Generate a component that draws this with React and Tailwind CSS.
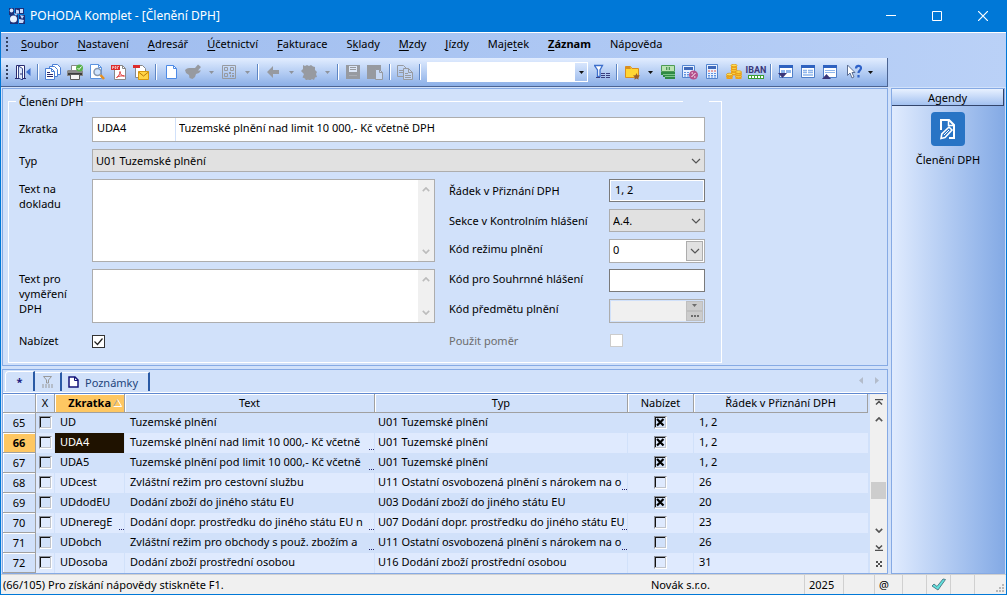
import { useState } from "react";
import clsx from "clsx";

const MENU = [
  ["", "S", "oubor"],
  ["", "N", "astavení"],
  ["", "A", "dresář"],
  ["", "Ú", "četnictví"],
  ["", "F", "akturace"],
  ["S", "k", "lady"],
  ["", "M", "zdy"],
  ["", "J", "ízdy"],
  ["Maje", "t", "ek"],
  ["", "Z", "áznam"],
  ["Náp", "o", "věda"],
];

const COLUMNS = [
  { label: "", width: "w-[33px]" },
  { label: "X", width: "w-[19px]" },
  { label: "Zkratka", width: "w-[70px]" },
  { label: "Text", width: "w-[250px]" },
  { label: "Typ", width: "w-[253px]" },
  { label: "Nabízet", width: "w-[66px]" },
  { label: "Řádek v Přiznání DPH", width: "" },
];

const ROWS = [
  { id: 65, code: "UD", text: "Tuzemské plnění", type: "U01 Tuzemské plnění", offer: true, line: "1, 2" },
  { id: 66, code: "UDA4", text: "Tuzemské plnění nad limit 10 000,- Kč včetně", textCut: true, type: "U01 Tuzemské plnění", offer: true, line: "1, 2" },
  { id: 67, code: "UDA5", text: "Tuzemské plnění pod limit 10 000,- Kč včetně", textCut: true, type: "U01 Tuzemské plnění", offer: true, line: "1, 2" },
  { id: 68, code: "UDcest", text: "Zvláštní režim pro cestovní službu", type: "U11 Ostatní osvobozená plnění s nárokem na o", typeCut: true, offer: false, line: "26" },
  { id: 69, code: "UDdodEU", text: "Dodání zboží do jiného státu EU", type: "U03 Dodání zboží do jiného státu EU", offer: true, line: "20" },
  { id: 70, code: "UDneregE", codeCut: true, text: "Dodání dopr. prostředku do jiného státu EU n", textCut: true, type: "U07 Dodání dopr. prostředku do jiného státu EU", typeCut: true, offer: false, line: "23" },
  { id: 71, code: "UDobch", text: "Zvláštní režim pro obchody s použ. zbožím a", textCut: true, type: "U11 Ostatní osvobozená plnění s nárokem na o", typeCut: true, offer: false, line: "26" },
  { id: 72, code: "UDosoba", text: "Dodání zboží prostřední osobou", type: "U16 Dodání zboží prostřední osobou", offer: false, line: "31" },
];

const Svg = ({ children, className = "h-4 w-4", box = "0 0 16 16" }) => (
  <svg viewBox={box} className={clsx("shrink-0", className)} fill="none" aria-hidden="true">
    {children}
  </svg>
);

/* ---------- toolbar drawings ---------- */

const DoorIcon = () => (
  <Svg>
    <path d="M1.500 14.500v-13h8v13" fill="#fff" stroke="#2b2b6e" />
    <path d="M3.500 2l4 2.500V16l-4-2z" fill="#dbe6fb" stroke="#3a4a8c" />
    <path d="M6 9v2M0 14.500h4M8 14.500h3" stroke="#2b2b6e" />
    <path d="M15.500 4v8L11 8z" fill="#3c6fd0" />
  </Svg>
);

const CopiesIcon = () => (
  <Svg>
    <path d="M7.500 .5h5l3 3v7h-8z" fill="#fff" stroke="#4a7fd6" />
    <path d="M4.500 2.500h5l3 3v7h-8z" fill="#fff" stroke="#4a7fd6" />
    <path d="M.5 4.500h6l3 3v8h-9z" fill="#fff" stroke="#4a7fd6" />
    <path d="M6.500 4.500v3h3" stroke="#4a7fd6" />
    <path d="M2 8.500h3M2 10.500h6M2 12.500h6" stroke="#2b2b6e" />
  </Svg>
);

const PrinterIcon = () => (
  <Svg>
    <path d="M4.500 1.500h7v5h-7z" fill="#fff" stroke="#888" />
    <path d="M1 6h14l1 1v5H0V7z" fill="#8a8a8a" />
    <path d="M1 9h14v2H1z" fill="#3c3c3c" />
    <path d="M3.500 10.500h9v5h-9z" fill="#f4f4f4" stroke="#5a5a5a" />
    <circle cx="12.500" cy="4" r="3.500" fill="#57b04a" />
    <path d="M10.500 4l1.500 1.500 2.500-3" stroke="#fff" />
  </Svg>
);

const PreviewIcon = () => (
  <Svg>
    <path d="M1.500 .5h8l3 3v11h-11z" fill="#fff" stroke="#5b93e0" />
    <path d="M9.500 .5v3h3" stroke="#5b93e0" />
    <circle cx="8.500" cy="8" r="3.500" fill="#cfe4ff" stroke="#8898b0" strokeWidth="1.500" />
    <path d="M11.500 11l3.500 4" stroke="#e59020" strokeWidth="2.500" />
  </Svg>
);

const PdfIcon = () => (
  <Svg>
    <path d="M3.500 1.500h8l3 3v11h-11z" fill="#fff" stroke="#888" />
    <path d="M11.500 1.500v3h3" stroke="#888" />
    <path d="M0 1h9v5H0z" fill="#dd2c2c" />
    <path d="M1.500 5V2.500h1V4M4 2.500v2h1v-2zM6.500 5V2.500h1.500" stroke="#fff" strokeWidth=".6" />
    <path d="M5.500 13.500c2-1 3.500-3.500 3.500-6 0 3 2 4.500 4.500 4.500-3-.4-6 0-8 1.500z" stroke="#dd3a3a" />
  </Svg>
);

const PdfMailIcon = () => (
  <Svg>
    <path d="M2.500 1.500h7l3 3v9h-10z" fill="#fff" stroke="#888" />
    <path d="M0 1h7v3H0z" fill="#dd2c2c" />
    <path d="M5.500 7.500h10v8h-10z" fill="#ffd447" stroke="#d99a10" />
    <path d="M5.500 8l5 4 5-4" stroke="#b9790a" />
  </Svg>
);

const PageIcon = () => (
  <Svg>
    <path d="M3.500 1.500h7l3 3v10h-10z" fill="#fff" stroke="#4d8ae6" />
    <path d="M10.500 1.500v3h3" stroke="#4d8ae6" />
  </Svg>
);

const WriteIcon = () => (
  <Svg>
    <path d="M0 6l2-1.500L4 4h6l3-3.500L16 3l-3 3.500h3L14 9l-3 1-1 3-2.500 2-3-1L4 11l-3-2z" fill="#979aa0" />
  </Svg>
);

const QrIcon = () => (
  <Svg>
    <path d="M1.500 1.500h13v13h-13z" stroke="#979aa0" />
    <path d="M3.500 3.500h3v3h-3zM9.500 3.500h3v3h-3zM3.500 9.500h3v3h-3z" stroke="#979aa0" />
    <path d="M8 8h2v2H8zM11 9h2v1h-2zM9 11h1v2H9zM11 11h2v2h-2z" fill="#979aa0" />
  </Svg>
);

const BackIcon = () => (
  <Svg>
    <path d="M2 8l6-6v4h6v4H8v4z" fill="#979aa0" />
  </Svg>
);

const BlobIcon = () => (
  <Svg>
    <path d="M2 1l2 1 2-1 2 1 2-1 2 1.500 2 .5v3l2 2-1 2 1 3-2 .5-1 2.500-2-1-2 1.500-2-1-2 1-1-2-2.500-1L3 10 0 7l2-2z" fill="#979aa0" />
  </Svg>
);

const SaveIcon = () => (
  <Svg>
    <path d="M1 1h14v14H1z" fill="#979aa0" />
    <path d="M4 2h8v6H4z" fill="#dce6f6" />
    <path d="M5 3.500h6M5 5.500h6" stroke="#979aa0" />
    <path d="M4 11h8v1H4z" fill="#a9adb4" />
  </Svg>
);

const PasteIcon = () => (
  <Svg>
    <path d="M0 1h14v14H0z" fill="#979aa0" />
    <path d="M8.500 5.500h4l3 3v7h-7z" fill="#c8d9f4" stroke="#979aa0" />
    <path d="M12.500 5.500v3h3" stroke="#979aa0" />
  </Svg>
);

const CopyIcon = () => (
  <Svg>
    <path d="M.5 1.500h6l3 3v8h-9z" stroke="#979aa0" />
    <path d="M2 6.500h4M2 8.500h4" stroke="#979aa0" />
    <path d="M6.500 4.500h5l4 4v7h-9z" fill="#c1d4f3" stroke="#979aa0" />
    <path d="M11.500 4.500v4h4M8 9.500h3M8 11.500h6M8 13.500h6" stroke="#979aa0" />
  </Svg>
);

const FilterIcon = () => (
  <Svg>
    <path d="M.5 1.500h8L6 6v6.500H3.500V6z" fill="#fff" stroke="#3d6fcc" strokeWidth="1.300" />
    <path d="M7 9.500h4M12 9.500h4M7 11.500h4M12 11.500h4M2 13.500h4M7 13.500h4M12 13.500h4" stroke="#3a3f80" />
  </Svg>
);

const FolderIcon = () => (
  <Svg>
    <path d="M1.500 2.500h5l1.500 2h6.500v9h-13z" fill="#ffd633" stroke="#d98e1e" />
    <path d="M2 3h4l1 2H2z" fill="#d98e1e" />
    <path d="M12.500 9l1 2.200 2.500.3-1.800 1.700.4 2.600-2.100-1.200-2.100 1.200.4-2.600L9 11.500l2.500-.3z" fill="#9a5f2c" />
  </Svg>
);

const MoneyIcon = () => (
  <Svg>
    <path d="M1 8h14v7H5v-2H3v-2H1z" fill="#2f8a45" />
    <path d="M3 10.500h12M5 12.500h10" stroke="#7cc48a" />
    <path d="M1.500 1.500h13v6h-13z" fill="#b9e3b2" stroke="#4d9a55" />
    <path d="M6 3h4v3H6z" fill="#4d9a55" />
    <path d="M8 3v3" stroke="#e2f5dd" />
  </Svg>
);

const CalcIcon = ({ percent }) => (
  <Svg>
    {percent ? (
      <>
        <path d="M.5 1.500h12v12H.5z" fill="#e8f1ff" stroke="#5485cf" />
        <path d="M2 3h9v3H2z" fill="#3f68b8" />
        <path d="M2 8.500h8M2 10.500h6M2 12h5" stroke="#5f92e0" strokeDasharray="2 1" />
        <circle cx="11.500" cy="11" r="4.500" fill="#b5508c" />
        <path d="M9.500 13l4-4M9.500 9h1.500M12 13h1.500" stroke="#fff" />
      </>
    ) : (
      <>
        <path d="M2.500 .5h11v14h-11z" fill="#e8f1ff" stroke="#5485cf" />
        <path d="M4 2h8v3H4z" fill="#3f68b8" />
        <path d="M4 7h8" stroke="#e05a4e" strokeDasharray="2 1" />
        <path d="M4 9.500h8M4 11.500h8M4 13h8" stroke="#5f92e0" strokeDasharray="2 1" />
      </>
    )}
  </Svg>
);

const Coin = ({ x, y }) => (
  <>
    <path d={`M${x} ${y}h6v2.500h-6z`} fill="#f0a41c" />
    <ellipse cx={x + 3} cy={y} rx="3" ry="1.300" fill="#ffe052" stroke="#d98f10" strokeWidth=".7" />
  </>
);

const CoinsIcon = () => (
  <Svg>
    <Coin x={5} y={9} />
    <Coin x={5} y={6.5} />
    <Coin x={5} y={4} />
    <Coin x={5} y={1.5} />
    <Coin x={0.500} y={12.500} />
    <Coin x={0.500} y={10.500} />
    <Coin x={9.500} y={12.500} />
    <Coin x={9.500} y={10} />
    <Coin x={9.500} y={8} />
  </Svg>
);

const IbanIcon = () => (
  <span className="flex flex-col items-center">
    <span className="font-['Liberation_Sans_Narrow','Roboto',sans-serif] text-[9px] leading-[9px] font-bold text-[#3a3678]">IBAN</span>
    <Svg className="h-[4px] w-4" box="0 0 16 4">
      <path d="M0 0h16v4H0z" fill="#3c9f34" />
      <path d="M1 2h14" stroke="#fff" strokeWidth="2" strokeDasharray="2 1" />
    </Svg>
  </span>
);

const WindowIcon = ({ kind }) => (
  <Svg>
    <path d="M1.500 1.500h13v12h-13z" fill="#fff" stroke="#4f7fc9" />
    <path d="M1 1h14v3H1z" fill="#2f62c0" />
    {kind === "down" && (
      <>
        <path d="M3 6h4v3H3zM8 6h5v3H8z" fill="#8fb6ec" />
        <path d="M0 9h9L4.500 14z" fill="#3a3678" />
      </>
    )}
    {kind === "full" && <path d="M3 6.500h4M8 6.500h5M3 8.500h4M8 8.500h5M3 11h10" stroke="#8fb6ec" strokeWidth="1.500" />}
    {kind === "up" && (
      <>
        <path d="M3 6.500h10M3 8.500h10" stroke="#8fb6ec" />
        <path d="M0 15h9L4.500 10z" fill="#3a3678" />
      </>
    )}
  </Svg>
);

const HelpIcon = () => (
  <Svg className="ml-1 h-4 w-4">
    <path d="M1.500 1v10.500l2.500-2.500 2 5 2-1-2-4.500h3z" fill="#fff" stroke="#5c6f95" />
    <path d="M10 4.500c0-3.500 5-3.500 5-.5 0 2.500-2.500 2.500-2.500 5M12.500 11v2.500" stroke="#2f62c8" strokeWidth="2.200" />
  </Svg>
);

const Triangle = ({ color = "#111" }) => (
  <Svg className="h-[3px] w-[5px]" box="0 0 5 3">
    <path d="M0 0h5L2.500 3z" fill={color} />
  </Svg>
);

const Chevron = ({ up, color = "#555", className = "h-[6px] w-[10px]", width = 1.2 }) => (
  <Svg className={className} box="0 0 10 6">
    <path d={up ? "M1 5l4-4 4 4" : "M1 1l4 4 4-4"} stroke={color} strokeWidth={width} />
  </Svg>
);

/* ---------- toolbar parts ---------- */

const ToolButton = ({ label, children, disabled }) => (
  <button type="button" aria-label={label} disabled={disabled} className="flex h-[22px] w-[22px] shrink-0 items-center justify-center">
    {children}
  </button>
);

const DropButton = ({ label, disabled }) => (
  <button type="button" aria-label={label} disabled={disabled} className="flex h-[22px] w-[14px] shrink-0 items-center justify-center">
    <Triangle color={disabled ? "#8e939c" : "#111"} />
  </button>
);

const Separator = () => (
  <div className="flex h-4 w-2 shrink-0 justify-center">
    <div className="w-px bg-[#5e86c4]" />
    <div className="w-px bg-white" />
  </div>
);

const Grip = ({ className }) => (
  <div className={clsx("w-[2px] shrink-0 bg-[repeating-linear-gradient(#33415f_0_2px,transparent_2px_4px)]", className)} />
);

const TitleBar = () => (
  <header className="flex h-[33px] items-center border-b border-white bg-[#0078d7] pl-2 text-white">
    <Svg className="mr-1 h-4 w-[17px]" box="0 0 17 16">
      <path d="M0 0h5v7H0zM6 0h9v6H6zM1 7h8v9H1zM10 7h6v9h-6z" fill="#1d2f78" />
      <ellipse cx="2.500" cy="2.500" rx="1.800" ry="2" fill="#dce9ff" />
      <circle cx="4.500" cy="11" r="3.500" fill="#e8f1ff" />
      <path d="M7 1.500l3 1v3H7zM11 1h3v4h-3zM5 5l3 1-1 2zM11 7l4 1-2 3zM10 11l5 1-1 3h-4z" fill="#c5dafc" />
    </Svg>
    <h1 className="flex-1 pb-px text-xs">POHODA Komplet - [Členění DPH]</h1>
    <button type="button" aria-label="Minimalizovat" className="flex h-8 w-[46px] items-center justify-center">
      <Svg className="h-[10px] w-[10px]" box="0 0 10 10"><path d="M0 4.500h10" stroke="#fff" /></Svg>
    </button>
    <button type="button" aria-label="Maximalizovat" className="flex h-8 w-[46px] items-center justify-center">
      <Svg className="h-[10px] w-[10px]" box="0 0 10 10"><path d="M.5.5h9v9h-9z" stroke="#fff" /></Svg>
    </button>
    <button type="button" aria-label="Zavřít" className="flex h-8 w-[46px] items-center justify-center">
      <Svg className="h-[10px] w-[10px]" box="0 0 10 10"><path d="M0 0l10 10M10 0L0 10" stroke="#fff" strokeWidth="1.200" /></Svg>
    </button>
  </header>
);

const MenuBar = () => (
  <nav className="flex h-[25px] items-center pb-1 pl-[5px]">
    <Grip className="h-[14px]" />
    <div className="flex gap-[19px] pl-[13px]">
      {MENU.map(([before, key, after]) => (
        <button key={before + key + after} type="button" className={clsx("whitespace-nowrap", key === "Z" && "font-bold")}>
          {before}
          <span className="underline underline-offset-2">{key}</span>
          {after}
        </button>
      ))}
    </div>
  </nav>
);

const Toolbar = () => (
  <div className="mr-[118px] flex h-[29px] items-center border-r border-b border-[#4b6493] bg-linear-to-b from-[#e2edff] to-[#8bafe7] pl-[5px]">
    <Grip className="mr-1 h-[14px]" />
    <ToolButton label="Konec"><DoorIcon /></ToolButton>
    <Separator />
    <ToolButton label="Tiskové sestavy"><CopiesIcon /></ToolButton>
    <ToolButton label="Tisk"><PrinterIcon /></ToolButton>
    <ToolButton label="Náhled"><PreviewIcon /></ToolButton>
    <ToolButton label="Export do PDF"><PdfIcon /></ToolButton>
    <ToolButton label="Odeslat PDF"><PdfMailIcon /></ToolButton>
    <Separator />
    <ToolButton label="Nový"><PageIcon /></ToolButton>
    <ToolButton label="Zápis" disabled><WriteIcon /></ToolButton>
    <DropButton label="Možnosti zápisu" disabled />
    <ToolButton label="QR kód" disabled><QrIcon /></ToolButton>
    <DropButton label="Možnosti QR kódu" disabled />
    <Separator />
    <ToolButton label="Zpět" disabled><BackIcon /></ToolButton>
    <DropButton label="Historie" disabled />
    <ToolButton label="Vazby" disabled><BlobIcon /></ToolButton>
    <DropButton label="Možnosti vazeb" disabled />
    <Separator />
    <ToolButton label="Uložit" disabled><SaveIcon /></ToolButton>
    <ToolButton label="Vložit" disabled><PasteIcon /></ToolButton>
    <Separator />
    <ToolButton label="Kopírovat" disabled><CopyIcon /></ToolButton>
    <Separator />
    <div className="mx-[3px] flex h-5 w-[161px] shrink-0 border border-white bg-white">
      <input aria-label="Hledat" className="min-w-0 flex-1 px-1 outline-none" />
      <button type="button" aria-label="Hledané výrazy" className="flex w-3 items-center justify-center bg-linear-to-b from-[#d8e6fd] to-[#a3c0ee]">
        <Triangle />
      </button>
    </div>
    <ToolButton label="Filtr"><FilterIcon /></ToolButton>
    <Separator />
    <ToolButton label="Oblíbené"><FolderIcon /></ToolButton>
    <DropButton label="Seznam oblíbených" />
    <ToolButton label="Měny"><MoneyIcon /></ToolButton>
    <ToolButton label="Kalkulačka DPH"><CalcIcon percent /></ToolButton>
    <ToolButton label="Kalkulačka"><CalcIcon /></ToolButton>
    <ToolButton label="Mince"><CoinsIcon /></ToolButton>
    <ToolButton label="IBAN"><IbanIcon /></ToolButton>
    <Separator />
    <ToolButton label="Tabulka dolů"><WindowIcon kind="down" /></ToolButton>
    <ToolButton label="Celé okno"><WindowIcon kind="full" /></ToolButton>
    <ToolButton label="Tabulka nahoru"><WindowIcon kind="up" /></ToolButton>
    <ToolButton label="Nápověda"><HelpIcon /></ToolButton>
    <DropButton label="Možnosti nápovědy" />
  </div>
);

/* ---------- form ---------- */

const GraySelect = ({ id, value, className }) => (
  <div className={clsx("relative h-[23px]", className)}>
    <select id={id} defaultValue={value} className="h-full w-full appearance-none border border-[#adadad] bg-[#e1e1e1] pl-[3px] outline-none">
      <option>{value}</option>
    </select>
    <span className="pointer-events-none absolute inset-y-0 right-1 flex items-center">
      <Chevron />
    </span>
  </div>
);

const NoteBox = ({ id, label, className }) => (
  <div className={clsx("flex", className)}>
    <label htmlFor={id} className="w-[73px] shrink-0 pt-[2px] pr-3">{label}</label>
    <div className="flex flex-1 border border-[#adadad] bg-white">
      <textarea id={id} className="min-w-0 flex-1 resize-none px-1 outline-none" />
      <div className="flex w-4 flex-col items-center justify-between bg-[#f0f0f0] py-[7px]">
        <Chevron up color="#bcbcbc" width={2} className="h-[5px] w-2" />
        <Chevron color="#bcbcbc" width={2} className="h-[5px] w-2" />
      </div>
    </div>
  </div>
);

const SideField = ({ id, label, muted, raised, children }) => (
  <div className="flex h-[23px] items-center">
    <label htmlFor={id} className={clsx("w-40 shrink-0", muted && "text-[#6d6d6d]", raised && "pb-1")}>{label}</label>
    {children}
  </div>
);

const RecordForm = () => {
  const [offered, setOffered] = useState(true);

  return (
    <form className="border border-[#86aae4] bg-[#d1e1fa] px-[5px] pt-[5px] pb-[2px]">
      <fieldset className="relative w-[714px] border border-white px-[10px] pb-[9px]">
        <legend className="-ml-[3px] px-[3px] leading-[15px]">Členění DPH</legend>
        <span className="absolute -top-[8px] right-3 h-[1px] w-[26px] bg-[#d1e1fa]" />

        <div className="mt-2 mr-[6px] flex flex-col gap-[7px]">
          <div className="flex h-[25px] items-center">
            <label htmlFor="code" className="w-[73px] shrink-0 pb-[2px]">Zkratka</label>
            <div className="flex h-full flex-1 border border-[#adadad] bg-white">
              <input id="code" defaultValue="UDA4" className="w-[83px] border-r border-[#d1e1fa] px-1 pb-[5px] outline-none" />
              <input aria-label="Název" defaultValue="Tuzemské plnění nad limit 10 000,- Kč včetně DPH" className="min-w-0 flex-1 px-[3px] pb-[5px] outline-none" />
            </div>
          </div>

          <div className="flex items-center">
            <label htmlFor="type" className="w-[73px] shrink-0">Typ</label>
            <GraySelect id="type" value="U01 Tuzemské plnění" className="flex-1" />
          </div>

          <div className="flex gap-[14px]">
            <div className="flex flex-1 flex-col gap-[7px]">
              <NoteBox id="doc-text" label="Text na dokladu" className="h-[83px]" />
              <NoteBox id="vat-text" label="Text pro vyměření DPH" className="h-[54px]" />
              <div className="flex h-[23px] items-center">
                <label htmlFor="offered" className="w-[73px] pb-[2px]">Nabízet</label>
                <span className="relative flex">
                  <input
                    id="offered"
                    type="checkbox"
                    checked={offered}
                    onChange={() => setOffered(!offered)}
                    className="peer h-[13px] w-[13px] appearance-none border border-[#333] bg-white"
                  />
                  <svg viewBox="0 0 13 13" className="pointer-events-none invisible absolute h-[13px] w-[13px] peer-checked:visible" fill="none">
                    <path d="M2.500 6.500l3 3 5-6" stroke="#222" strokeWidth="1.200" />
                  </svg>
                </span>
              </div>
            </div>

            <div className="flex w-64 flex-col gap-[7px]">
              <SideField id="line" label="Řádek v Přiznání DPH">
                <input id="line" readOnly defaultValue="1, 2" className="h-[23px] w-24 border border-[#7a7a7a] bg-[#d1e1fa] px-[5px] pb-[2px] ring-1 ring-white outline-none ring-inset" />
              </SideField>
              <SideField id="section" label="Sekce v Kontrolním hlášení">
                <GraySelect id="section" value="A.4." className="w-24" />
              </SideField>
              <SideField id="mode" label="Kód režimu plnění" raised>
                <div className="flex h-6 w-24 border border-[#adadad] bg-white p-px">
                  <input id="mode" defaultValue="0" className="min-w-0 flex-1 px-[2px] pb-[2px] outline-none" />
                  <button type="button" aria-label="Vybrat kód režimu" className="flex w-[17px] items-center justify-center border border-[#adadad] bg-[#e1e1e1]">
                    <Chevron />
                  </button>
                </div>
              </SideField>
              <SideField id="summary" label="Kód pro Souhrnné hlášení" raised>
                <input id="summary" className="h-[23px] w-24 border border-[#7a7a7a] bg-white px-1 outline-none" />
              </SideField>
              <SideField id="subject" label="Kód předmětu plnění" raised>
                <div className="flex h-6 w-24 border border-[#adadad] bg-[#f0f0f0] p-px ring-1 ring-[#d1e1fa] ring-inset">
                  <input id="subject" disabled className="min-w-0 flex-1 px-[2px]" />
                  <div className="flex w-[17px] flex-col">
                    <button type="button" disabled aria-label="Rozbalit" className="flex flex-1 items-center justify-center border border-[#bfbfbf] bg-[#ccc]">
                      <Triangle color="#6d6d6d" />
                    </button>
                    <button type="button" disabled aria-label="Vybrat předmět" className="flex flex-1 items-center justify-center border border-[#bfbfbf] bg-[#ccc]">
                      <Svg className="h-[2px] w-2" box="0 0 8 2">
                        <path d="M0 0h2v2H0zM3 0h2v2H3zM6 0h2v2H6z" fill="#6d6d6d" />
                      </Svg>
                    </button>
                  </div>
                </div>
              </SideField>
              <SideField id="ratio" label="Použit poměr" muted>
                <input id="ratio" type="checkbox" disabled className="ml-px h-[13px] w-[13px] appearance-none border border-[#ccc] bg-white" />
              </SideField>
            </div>
          </div>
        </div>
      </fieldset>
    </form>
  );
};

/* ---------- record table ---------- */

const GridCheck = ({ label, checked }) => (
  <span className="relative mx-auto flex w-[13px]">
    <input
      type="checkbox"
      aria-label={label}
      defaultChecked={checked}
      className="peer h-[13px] w-[13px] appearance-none border border-t-[#8a8f99] border-r-white border-b-white border-l-[#8a8f99] shadow-[inset_-1px_-1px_0_#c0c4cc,inset_1px_1px_0_#111]"
    />
    <svg viewBox="0 0 13 13" className="pointer-events-none invisible absolute h-[13px] w-[13px] peer-checked:visible" fill="none">
      <path d="M3 3l6.500 6.500M9.500 3L3 9.500" stroke="#000" strokeWidth="2.200" />
    </svg>
  </span>
);

const CutCell = ({ cut, className, children }) => (
  <td className={clsx("relative overflow-hidden p-0 pb-[2px] whitespace-nowrap", className)}>
    {children}
    {cut && <span className="absolute right-0 bottom-[3px] h-px w-[5px] bg-[repeating-linear-gradient(90deg,#22226b_0_1px,transparent_1px_2px)]" />}
  </td>
);

const RecordTable = () => (
  <table className="w-full table-fixed border-separate border-spacing-0">
    <thead>
      <tr className="h-[19px]">
        {COLUMNS.map((col) => (
          <th
            key={col.label}
            className={clsx(
              "border-r border-b border-[#a0a0a0] p-0 leading-[18px] font-normal shadow-[inset_1px_1px_0_#fff]",
              col.width,
              col.label === "Zkratka" ? "bg-[#fec762]" : "bg-[#d1e1fa]"
            )}
          >
            {col.label === "Zkratka" ? (
              <span className="flex items-center justify-end gap-[2px] pr-[2px] font-bold">
                Zkratka
                <Svg className="h-2 w-[9px]" box="0 0 9 8">
                  <path d="M4.500 .5L.5 7.500" stroke="#a0a0a0" />
                  <path d="M4.500 .5l4 7h-8" stroke="#fff" />
                </Svg>
              </span>
            ) : (
              col.label
            )}
          </th>
        ))}
      </tr>
    </thead>
    <tbody>
      {ROWS.map((row, i) => {
        const current = row.id === 66;
        return (
          <tr key={row.id} className={clsx("h-5 leading-[18px]", i % 2 ? "bg-[#dfeafe]" : "bg-[#d1e1fa]")}>
            <th
              scope="row"
              className={clsx(
                "border-r border-b border-[#a0a0a0] p-0 shadow-[inset_1px_1px_0_#fff]",
                current ? "bg-[#fec762] font-bold" : "bg-[#d1e1fa] font-normal"
              )}
            >
              {row.id}
            </th>
            <td className="border-r border-[#d1e1fa] p-0 pb-px"><GridCheck label={`Označit ${row.code}`} /></td>
            <CutCell cut={row.codeCut} className={clsx("border-r border-[#d1e1fa] pl-[5px]", current && "bg-[#1f1200] text-white")}>{row.code}</CutCell>
            <CutCell cut={row.textCut} className="border-r border-[#d1e1fa] pl-[5px]">{row.text}</CutCell>
            <CutCell cut={row.typeCut} className="border-r border-[#d1e1fa] pl-[3px]">{row.type}</CutCell>
            <td className="border-r border-[#d1e1fa] p-0 pb-px"><GridCheck label={`Nabízet ${row.code}`} checked={row.offer} /></td>
            <td className="p-0 pb-[2px] pl-[5px]">{row.line}</td>
          </tr>
        );
      })}
    </tbody>
  </table>
);

const TableScroll = () => (
  <div className="ml-[2px] flex w-[17px] shrink-0 flex-col items-center bg-[#f0f0f0] pt-[5px] pb-[6px]">
    <Svg className="h-[6px] w-2" box="0 0 8 6"><path d="M0 .5h8M1 5.500l3-3 3 3" stroke="#505050" strokeWidth="1.500" /></Svg>
    <Chevron up width={2} className="mt-3 h-[5px] w-2" />
    <div className="mt-[60px] h-[17px] w-[15px] bg-[#cdcdcd]" />
    <div className="flex-1" />
    <Chevron width={2} className="mb-3 h-[5px] w-2" />
    <Svg className="mb-[10px] h-[6px] w-2" box="0 0 8 6"><path d="M0 5.500h8M1 .5l3 3 3-3" stroke="#505050" strokeWidth="1.500" /></Svg>
    <Svg className="h-[6px] w-[6px]" box="0 0 6 6"><path d="M0 0h2v2H0zM4 0h2v2H4zM2 2h2v2H2zM0 4h2v2H0zM4 4h2v2H4z" fill="#505050" /></Svg>
  </div>
);

const RecordPanel = () => (
  <section className="flex flex-1 flex-col border border-[#86aae4] bg-[#d1e1fa]">
    <div className="border-b border-[#5f88d0]">
      <div className="flex h-[23px] items-end border-b border-white pb-px pl-[2px] text-[#22447c]">
        <button type="button" className="flex h-5 w-[30px] items-center justify-center rounded-tl-sm border-t border-r-2 border-l border-t-white border-r-[#2a5aa5] border-l-white font-bold text-[#1a1a80]">
          *
        </button>
        <button type="button" aria-label="Filtr záznamů" className="flex h-[19px] w-[27px] items-center justify-center border-t border-r-2 border-t-white border-r-[#2a5aa5]">
          <Svg className="h-3 w-3" box="0 0 12 12">
            <path d="M1.500 .5h8L6.500 4v3h-2V4z" stroke="#999" />
            <path d="M0 9h11M0 11h11" stroke="#999" strokeDasharray="2 1" />
          </Svg>
        </button>
        <button type="button" className="flex h-[19px] w-[88px] items-center gap-[6px] border-t border-r-2 border-t-white border-r-[#2a5aa5] pl-[6px]">
          <Svg className="h-3 w-[11px]" box="0 0 11 12">
            <path d="M1 1h6l3 3v7H1z" fill="#fff" stroke="#14147a" strokeWidth="1.500" />
            <path d="M6.500 1v3.500H10" stroke="#14147a" />
          </Svg>
          Poznámky
        </button>
        <div className="mr-2 mb-[7px] ml-auto flex gap-3">
          <Svg className="h-[7px] w-1" box="0 0 4 7"><path d="M4 0v7L0 3.500z" fill="#b3bccb" /></Svg>
          <Svg className="h-[7px] w-1" box="0 0 4 7"><path d="M0 0v7l4-3.500z" fill="#b3bccb" /></Svg>
        </div>
      </div>
    </div>
    <div className="flex flex-1 items-stretch">
      <div className="min-w-0 flex-1">
        <RecordTable />
      </div>
      <TableScroll />
    </div>
  </section>
);

const Sidebar = () => (
  <aside className="flex w-[114px] shrink-0 flex-col border border-[#86aae4] bg-linear-to-r from-[#e0ebfe] to-[#84aae5]">
    <h2 className="h-[17px] border-r border-b border-[#33456b] bg-linear-to-b from-[#e8f1ff] to-[#a3c1f0] text-center leading-[17px]">Agendy</h2>
    <a href="#cleneni" className="mt-[6px] flex flex-col items-center gap-[6px]">
      <span className="flex h-[34px] w-[34px] items-center justify-center rounded-[4px] bg-[#2874c5]">
        <Svg className="h-[22px] w-[18px]" box="0 0 18 22">
          <path d="M2 12V2h8l5 5v13h-5" stroke="#fff" strokeWidth="2" />
          <path d="M9.500 2v5.500H15" stroke="#fff" strokeWidth="1.500" />
          <path d="M2 20.500l.8-4.500 7.200-7 3 3-7 7.500z" fill="#2874c5" stroke="#fff" strokeWidth="1.600" />
          <path d="M5 17l5-5" stroke="#fff" />
        </Svg>
      </span>
      Členění DPH
    </a>
  </aside>
);

const StatusBar = () => (
  <footer className="flex h-5 items-stretch border-t border-[#d0d0d0] bg-[#f0f0f0] leading-[19px]">
    <span className="flex-1 pl-[2px]">(66/105) Pro získání nápovědy stiskněte F1.</span>
    <span className="w-[153px]">Novák s.r.o.</span>
    <span className="w-[39px] border-l border-[#d0d0d0] pl-1">2025</span>
    <span className="w-[31px] border-l border-[#d0d0d0]" />
    <span className="w-[28px] border-l border-[#d0d0d0] pl-1">@</span>
    <span className="w-6 border-l border-[#d0d0d0]" />
    <span className="flex w-6 items-center border-l border-[#d0d0d0] pl-1">
      <Svg className="h-[13px] w-[15px]" box="0 0 15 13">
        <path d="M1 8l2-2 3 2.500L12 1l2.500.5L7 12z" fill="#5fe0dc" stroke="#50808c" />
      </Svg>
    </span>
    <span className="w-6 border-l border-[#d0d0d0]" />
    <span className="flex w-8 items-end justify-end border-l border-[#d0d0d0] pr-[2px] pb-[2px]">
      <Svg className="h-2 w-2" box="0 0 8 8">
        <path d="M6 0h2v2H6zM3 3h2v2H3zM6 3h2v2H6zM0 6h2v2H0zM3 6h2v2H3zM6 6h2v2H6z" fill="#b8b8b8" />
      </Svg>
    </span>
  </footer>
);

export default function App() {
  return (
    <div className="flex min-h-screen flex-col border border-t-0 border-[#0078d7] bg-linear-to-r from-[#9dbbee] to-[#bad1f7] font-['Noto_Sans','Open_Sans',sans-serif] text-[11px] leading-[15px] text-black">
      <TitleBar />
      <MenuBar />
      <Toolbar />
      <main className="flex flex-1 gap-[3px] bg-[#d1e1fa] px-px pt-px">
        <div className="flex min-w-0 flex-1 flex-col gap-[3px]">
          <RecordForm />
          <RecordPanel />
        </div>
        <Sidebar />
      </main>
      <StatusBar />
    </div>
  );
}
